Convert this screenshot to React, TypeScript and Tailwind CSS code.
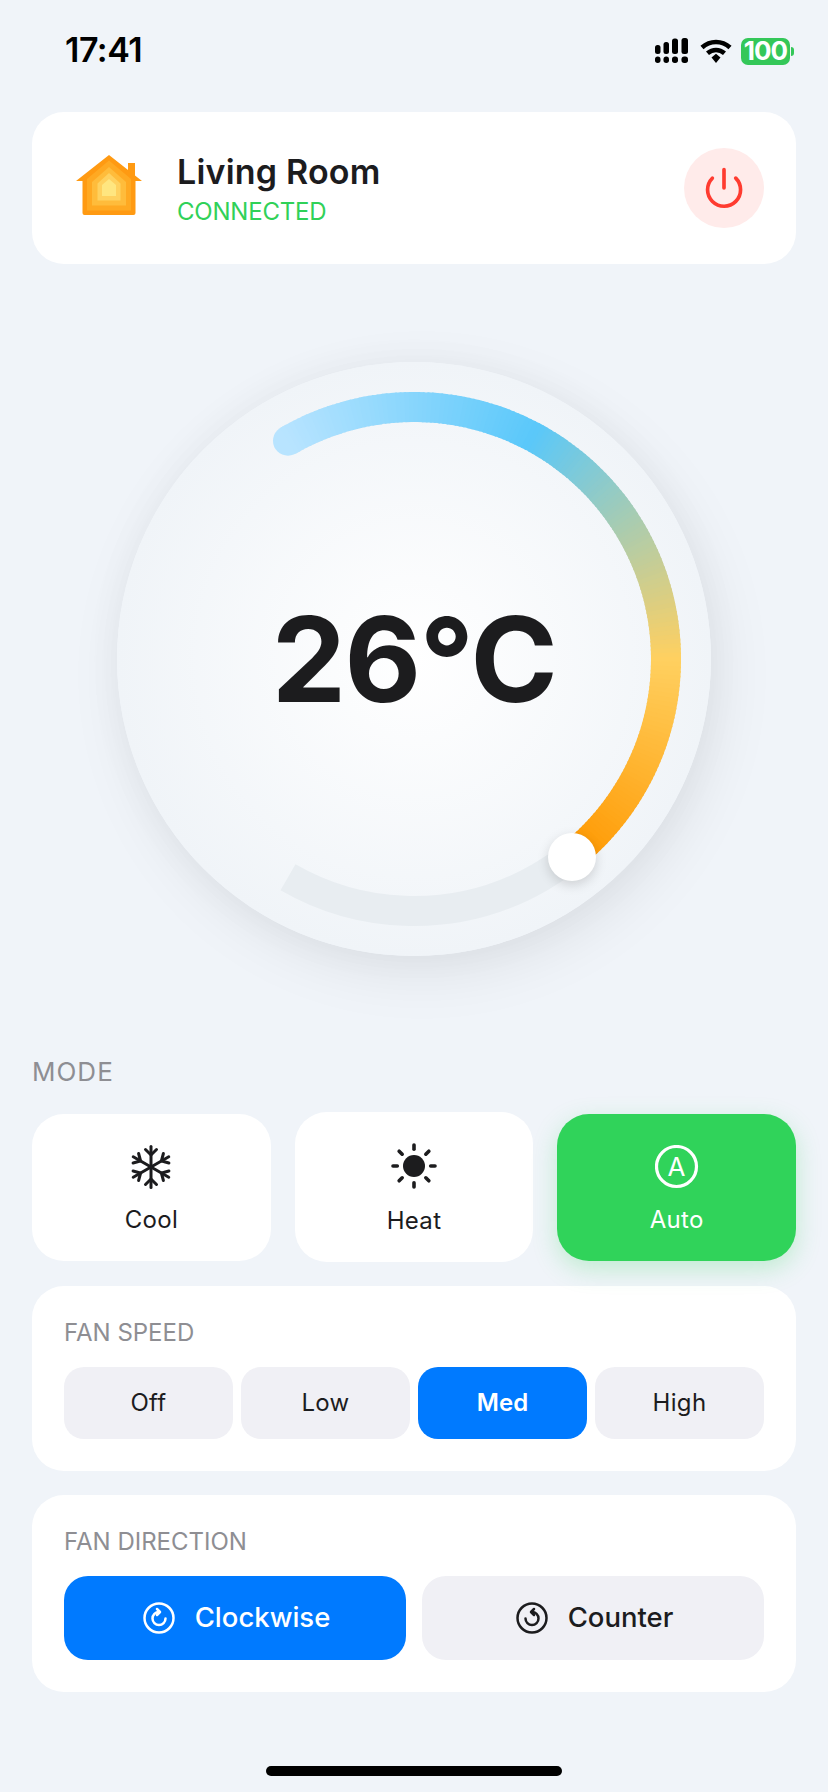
import React from "react";
import { Power } from "lucide-react";

const CX = 300, CY = 300, R = 252;

function polar(deg: number, r = R) {
  const a = (deg * Math.PI) / 180;
  return [CX + r * Math.sin(a), CY - r * Math.cos(a)];
}
function arc(a: number, b: number) {
  const [x1, y1] = polar(a);
  const [x2, y2] = polar(b);
  return `M${x1.toFixed(2)} ${y1.toFixed(2)}A${R} ${R} 0 ${b - a > 180 ? 1 : 0} 1 ${x2.toFixed(2)} ${y2.toFixed(2)}`;
}
const stops: [number, number[]][] = [
  [-30, [184, 228, 255]],
  [28, [90, 200, 250]],
  [90, [255, 208, 96]],
  [141.43, [255, 152, 0]],
];
function colorAt(deg: number) {
  for (let i = 0; i < stops.length - 1; i++) {
    const [a, ca] = stops[i];
    const [b, cb] = stops[i + 1];
    if (deg <= b) {
      const t = (deg - a) / (b - a);
      return `rgb(${ca.map((c, j) => Math.round(c + (cb[j] - c) * t)).join(",")})`;
    }
  }
  return "rgb(255,152,0)";
}

function Dial() {
  const segs = [];
  const n = 172;
  const end = 141.43;
  for (let i = 0; i < n; i++) {
    const a = -30 + ((end + 30) * i) / n;
    const b = -30 + ((end + 30) * (i + 1)) / n;
    segs.push(
      <path key={i} d={arc(a, Math.min(b + 0.4, end))} stroke={colorAt((a + b) / 2)} strokeWidth={30} fill="none" />
    );
  }
  const [sx, sy] = polar(-30);
  return (
    <svg viewBox="0 0 600 600" className="absolute inset-[-3px] w-[600px] h-[600px]">
      <path d={arc(-30, 210)} stroke="#e8edf1" strokeWidth={30} fill="none" />
      <circle cx={sx} cy={sy} r={15} fill={colorAt(-30)} />
      {segs}
    </svg>
  );
}

function Signal() {
  const cols = [
    [0, 7, 5.5, 9],
    [8.5, 4, 5.5, 12],
    [17, 0.5, 6, 15.5],
    [26.5, 0, 6.5, 16],
  ];
  return (
    <svg width="34" height="26" viewBox="0 0 34 26" fill="#000">
      {cols.map(([x, y, w, h], i) => (
        <g key={i}>
          <rect x={x} y={y} width={w} height={h} rx={2.5} />
          <rect x={x} y={18.5} width={w} height={6.5} rx={2.7} />
        </g>
      ))}
    </svg>
  );
}

function Wifi() {
  return (
    <svg width="32" height="24" viewBox="0 0 32 24">
      <path d="M2 8.500C10 1 22 1 30 8.500" stroke="#000" strokeWidth={4.5} fill="none" />
      <path d="M7.500 14.200C12.500 9.800 19.500 9.800 24.500 14.200" stroke="#000" strokeWidth={4.5} fill="none" />
      <path d="M11.500 18.600L16 14.800L20.500 18.600L16 24Z" fill="#000" />
    </svg>
  );
}

function HomeIcon() {
  return (
    <svg width="66" height="60" viewBox="0 0 66 60" className="mb-[6px]">
      <path d="M33 0L66 26H59.500V58Q59.500 60 57.500 60H8.500Q6.500 60 6.500 58V26H0Z" fill="#ff9a12" />
      <rect x="52" y="8" width="7" height="16" fill="#ff9a12" />
      <path d="M33 5.500L55 24V55.500H11V24Z" fill="#ffa922" />
      <path d="M33 12L50 27V50.500H16V27Z" fill="#ffbc3b" />
      <path d="M33 18L44.500 28.500V45.500H21.500V28.500Z" fill="#ffd15f" />
      <path d="M33 24L40 30V41H26V30Z" fill="#ffe680" />
    </svg>
  );
}

function Snowflake() {
  return (
    <svg width="40" height="45" viewBox="0 0 40 45" fill="none" stroke="#1c1c1e" strokeWidth={3} strokeLinecap="round">
      {[0, 60, 120, 180, 240, 300].map((r) => (
        <g key={r} transform={`rotate(${r} 20 22)`}>
          <path d="M20 22V1.500" />
          <path d="M14.500 4.500L20 10L25.500 4.500" />
        </g>
      ))}
    </svg>
  );
}

function Sun() {
  return (
    <svg width="46" height="48" viewBox="0 0 46 48" fill="none" stroke="#1c1c1e" strokeWidth={3.6} strokeLinecap="round">
      <circle cx={23} cy={23} r={11} fill="#1c1c1e" stroke="none" />
      {[0, 45, 90, 135, 180, 225, 270, 315].map((r) => (
        <path key={r} d="M23 2V6.300" transform={`rotate(${r} 23 23)`} />
      ))}
    </svg>
  );
}

function AutoIcon() {
  return (
    <svg width="44" height="45" viewBox="0 0 44 45" fill="none">
      <circle cx={21.5} cy={21.5} r={20} stroke="#fff" strokeWidth={3.2} />
      <text x={21.5} y={31} textAnchor="middle" fill="#fff" fontSize={26} fontFamily="Inter, sans-serif">
        A
      </text>
    </svg>
  );
}

function DirIcon({ color, ccw }: { color: string; ccw?: boolean }) {
  return (
    <svg width="32" height="32" viewBox="0 0 32 32" fill="none" stroke={color} strokeWidth={2.5} strokeLinecap="round" strokeLinejoin="round">
      <circle cx={16} cy={16} r={14.5} />
      <g transform={ccw ? "matrix(-1 0 0 1 32 0)" : undefined}>
        <path d="M16 10A6.500 6.500 0 1 0 22.500 16.500" />
        <path d="M14 7L17 10L14 13" />
      </g>
    </svg>
  );
}

function ModeCard({ label, icon, active }: { label: string; icon: React.ReactNode; active?: boolean }) {
  return (
    <div
      className={`flex-1 flex flex-col items-center rounded-[32px] pt-[31px] pb-[27px] ${
        active ? "bg-[#30d35a] text-white shadow-[0_8px_24px_rgba(48,211,90,0.25)]" : "bg-white text-[#1c1c1e]"
      }`}
    >
      {icon}
      <span className="mt-[15px] text-[24px] leading-[29px] font-normal tracking-[0.3px]">{label}</span>
    </div>
  );
}

function Speed({ label, active }: { label: string; active?: boolean }) {
  return (
    <div
      className={`flex-1 h-[72px] flex items-center justify-center rounded-[20px] text-[24px] ${
        active ? "bg-[#007aff] text-white font-semibold" : "bg-[#f0f0f5] text-[#1c1c1e] font-normal tracking-[0.3px]"
      }`}
    >
      {label}
    </div>
  );
}

export default function App() {
  return (
    <div className="w-[828px] h-[1792px] bg-[#f0f4f9] overflow-hidden relative font-['Inter',sans-serif]">
      <div className="h-[112px] flex items-start justify-between pl-[65px] pr-[34px] pt-[30px]">
        <span className="text-[34px] leading-[40px] font-semibold tracking-[-0.5px] text-black">17:41</span>
        <div className="flex items-center h-[40px] pt-[2px]">
          <Signal />
          <div className="ml-[11px]">
            <Wifi />
          </div>
          <div className="ml-[9px] w-[49px] h-[27px] rounded-[7px] bg-[#34c759] flex items-center justify-center text-white font-bold text-[26px] tracking-[-1px] leading-none">
            100
          </div>
          <div className="ml-[1px] w-[3px] h-[9px] rounded-r-full bg-[#34c759]" />
        </div>
      </div>

      <div className="mx-[32px] h-[152px] bg-white rounded-[32px] flex items-center pl-[44px] pr-[32px]">
        <HomeIcon />
        <div className="ml-[35px] flex-1">
          <div className="text-[34px] leading-[42px] font-semibold text-[#1c1c1e] tracking-[0.2px]">Living Room</div>
          <div className="text-[24px] leading-[29px] text-[#30d158] mt-[4px] tracking-[-0.2px]">CONNECTED</div>
        </div>
        <div className="w-[80px] h-[80px] rounded-full bg-[#ffebea] flex items-center justify-center">
          <Power size={44} color="#ff3b30" strokeWidth={2} />
        </div>
      </div>

      <div className="mt-[98px] mx-auto w-[594px] h-[594px] rounded-full relative flex items-center justify-center bg-[radial-gradient(circle_closest-side,#ffffff_0%,#f0f4f8_100%)] shadow-[8px_16px_60px_rgba(0,0,0,0.08),0_0_40px_rgba(0,0,0,0.03)]">
        <Dial />
        <span className="relative text-[118px] leading-none font-bold tracking-[-1.5px] text-[#1c1c1e]">26°C</span>
        <div className="absolute left-[431px] top-[471px] w-[48px] h-[48px] rounded-full bg-white shadow-[0_4px_12px_rgba(0,0,0,0.15)]" />
      </div>

      <div className="mx-[32px] mt-[100px]">
        <div className="text-[26px] leading-[32px] tracking-[1px] text-[#8e8e93]">MODE</div>
        <div className="mt-[24px] flex items-center gap-[24px]">
          <ModeCard label="Cool" icon={<Snowflake />} />
          <ModeCard label="Heat" icon={<Sun />} />
          <ModeCard label="Auto" icon={<AutoIcon />} active />
        </div>

        <div className="mt-[24px] bg-white rounded-[32px] p-[32px]">
          <div className="text-[24px] leading-[29px] text-[#8e8e93]">FAN SPEED</div>
          <div className="mt-[20px] flex gap-[8px]">
            <Speed label="Off" />
            <Speed label="Low" />
            <Speed label="Med" active />
            <Speed label="High" />
          </div>
        </div>

        <div className="mt-[24px] bg-white rounded-[32px] p-[32px]">
          <div className="text-[24px] leading-[29px] text-[#8e8e93]">FAN DIRECTION</div>
          <div className="mt-[20px] flex gap-[16px]">
            <div className="flex-1 h-[84px] rounded-[24px] bg-[#007aff] text-white flex items-center justify-center gap-[20px] pl-[3px] text-[27.5px] font-medium">
              <DirIcon color="#fff" />
              Clockwise
            </div>
            <div className="flex-1 h-[84px] rounded-[24px] bg-[#f0f0f5] text-[#1c1c1e] flex items-center justify-center gap-[20px] pl-[3px] text-[27.5px] font-medium">
              <DirIcon color="#1c1c1e" ccw />
              Counter
            </div>
          </div>
        </div>
      </div>

      <div className="absolute left-[266px] top-[1766px] w-[296px] h-[10px] rounded-full bg-black" />
    </div>
  );
}
